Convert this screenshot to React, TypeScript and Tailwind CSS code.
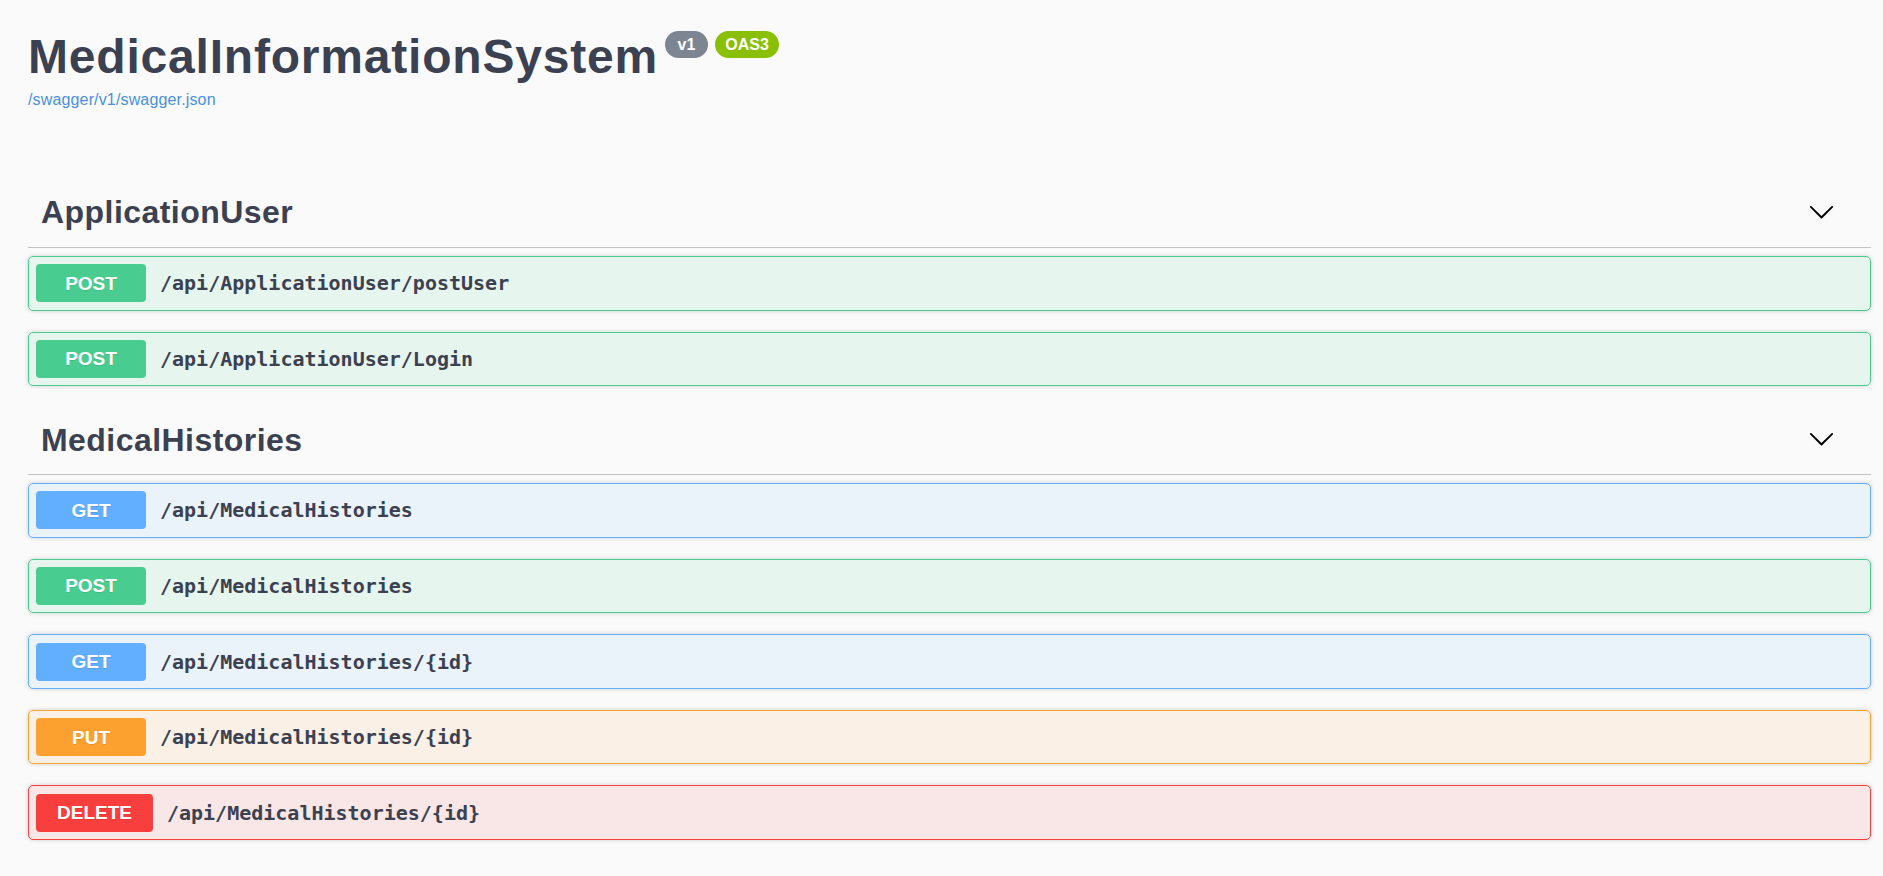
import React from "react";

type Method = "GET" | "POST" | "PUT" | "DELETE";

interface Operation {
  method: Method;
  path: string;
}

interface Tag {
  name: string;
  operations: Operation[];
}

// swagger method colours: badge / border and a 10% tint for the row
const methodStyles: Record<Method, { row: string; badge: string }> = {
  GET: { row: "border-[#61affe] bg-[#61affe]/10", badge: "bg-[#61affe]" },
  POST: { row: "border-[#49cc90] bg-[#49cc90]/10", badge: "bg-[#49cc90]" },
  PUT: { row: "border-[#fca130] bg-[#fca130]/10", badge: "bg-[#fca130]" },
  DELETE: { row: "border-[#f93e3e] bg-[#f93e3e]/10", badge: "bg-[#f93e3e]" },
};

const tags: Tag[] = [
  {
    name: "ApplicationUser",
    operations: [
      { method: "POST", path: "/api/ApplicationUser/postUser" },
      { method: "POST", path: "/api/ApplicationUser/Login" },
    ],
  },
  {
    name: "MedicalHistories",
    operations: [
      { method: "GET", path: "/api/MedicalHistories" },
      { method: "POST", path: "/api/MedicalHistories" },
      { method: "GET", path: "/api/MedicalHistories/{id}" },
      { method: "PUT", path: "/api/MedicalHistories/{id}" },
      { method: "DELETE", path: "/api/MedicalHistories/{id}" },
    ],
  },
];

const ArrowDown = () => (
  <svg viewBox="0 0 20 20" className="w-[27px] h-[27px] mb-[3px] fill-black" aria-hidden="true">
    <path d="M17.418 6.109c.272-.268.709-.268.979 0s.271.701 0 .969l-7.908 7.83c-.27.268-.707.268-.979 0l-7.908-7.83c-.27-.268-.27-.701 0-.969.271-.268.709-.268.979 0L10 13.25l7.418-7.141z" />
  </svg>
);

const OperationRow = ({ method, path }: Operation) => {
  const style = methodStyles[method];
  return (
    <div className={`h-[54.6px] flex items-center p-[7px] border rounded-[5px] shadow-[0_0_4px_rgba(0,0,0,0.19)] ${style.row}`}>
      <span
        className={`h-[38px] min-w-[110px] px-[21px] flex items-center justify-center rounded-[4px] text-white text-[19px] font-bold leading-none [text-shadow:0_1px_0_rgba(0,0,0,0.1)] ${style.badge}`}
      >
        {method}
      </span>
      <span className="pl-[14px] font-['DejaVu_Sans_Mono',monospace] font-bold text-[20px] leading-none text-[#3b4151]">
        {path}
      </span>
    </div>
  );
};

export default function App() {
  return (
    <div className="min-h-screen bg-[#fafafa] pl-[28px] pr-[12px] pt-[29px] pb-[40px] font-['Liberation_Sans',Arial,sans-serif] text-[#3b4151]">
      {/* Info */}
      <div className="mb-[70px]">
        <div className="flex items-start">
          <h2 className="text-[48px] leading-[55px] font-bold tracking-[0.8px]">MedicalInformationSystem</h2>
          <span className="ml-[7px] mt-[2px] h-[27px] w-[43px] flex items-center justify-center rounded-full bg-[#7d8492] text-white text-[16px] leading-none font-bold">
            v1
          </span>
          <span className="ml-[7px] mt-[2px] h-[27px] w-[64px] flex items-center justify-center rounded-full bg-[#89bf04] text-white text-[16px] leading-none font-bold">
            OAS3
          </span>
        </div>
        <a className="block mt-[6.5px] text-[16px] leading-[18.4px] text-[#4990e2] tracking-[0.15px]">/swagger/v1/swagger.json</a>
      </div>

      {/* Tags */}
      <div className="flex flex-col gap-[20px]">
        {tags.map((tag) => (
          <section key={tag.name}>
            <div className="h-[69px] flex items-center justify-between pl-[13px] pr-[36px] border-b border-[#3b4151]/30">
              <h3 className="text-[32px] leading-[37px] font-bold tracking-[0.45px]">{tag.name}</h3>
              <ArrowDown />
            </div>
            <div className="mt-[8px] flex flex-col gap-[21px]">
              {tag.operations.map((op, i) => (
                <OperationRow key={i} {...op} />
              ))}
            </div>
          </section>
        ))}
      </div>
    </div>
  );
}
